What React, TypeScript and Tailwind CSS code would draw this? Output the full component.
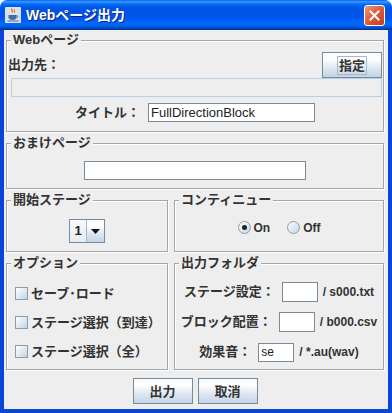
import type { ReactNode } from 'react';

const font = "font-['Liberation_Sans','Noto_Sans_CJK_JP',sans-serif]";

function Group({ title, className, children }: { title: string; className?: string; children?: ReactNode }) {
  return (
    <div className={`relative border border-[#a6a6a6] shadow-[inset_1px_1px_0_#ffffff,1px_1px_0_#ffffff] ${className ?? ''}`}>
      <span className="absolute left-[4px] -top-[9px] bg-[#eeeeee] px-[2px] text-[13px] font-bold leading-[16px] text-[#333333]">
        {title}
      </span>
      {children}
    </div>
  );
}

function Button({ label, focus, className }: { label: string; focus?: boolean; className?: string }) {
  return (
    <button
      className={`flex items-center justify-center border border-[#7a8a99] bg-[linear-gradient(to_bottom,#f7fafd,#ffffff_25%,#dfe8f2_60%,#c3d4e6)] text-[13px] font-bold text-[#333333] ${className ?? ''}`}
    >
      <span className={focus ? 'border border-[#a3b8cc] px-[1px] leading-[17px]' : 'leading-[17px]'}>{label}</span>
    </button>
  );
}

function Checkbox({ label }: { label: string }) {
  return (
    <div className="flex h-[29px] items-center gap-[3px]">
      <span className="h-[13px] w-[13px] border border-[#8a9cb0] bg-[linear-gradient(135deg,#ffffff,#dbe6f1_60%,#c2d3e5)]" />
      <span className="text-[13px] font-bold text-[#333333]">{label}</span>
    </div>
  );
}

function Radio({ label, checked }: { label: string; checked?: boolean }) {
  return (
    <div className="flex items-center gap-[3px]">
      <span className="flex h-[13px] w-[13px] items-center justify-center rounded-full border border-[#8a9cb0] bg-[linear-gradient(135deg,#ffffff,#dbe6f1_60%,#c2d3e5)]">
        {checked && <span className="h-[5px] w-[5px] rounded-full bg-[#222222]" />}
      </span>
      <span className="text-[12px] font-bold text-[#333333]">{label}</span>
    </div>
  );
}

function JavaIcon() {
  return (
    <svg width="16" height="16" viewBox="0 0 16 16">
      <rect x="0" y="0" width="16" height="16" rx="1" fill="#d9e1ee" />
      <path d="M7 1.5c-1.5 1.3 1.5 2.2 0 4" stroke="#e76f00" strokeWidth="1.2" fill="none" />
      <path d="M9.5 2.5c-1.2 1 1 1.8 -0.3 3" stroke="#e76f00" strokeWidth="1.1" fill="none" />
      <path d="M3.5 8h8v2.5c0 1.6-1.6 2.5-4 2.5s-4-0.9-4-2.5z" fill="#3f6ea8" />
      <path d="M11.5 8.6c1.6 0 1.8 1.8 0 2.2" stroke="#3f6ea8" strokeWidth="1" fill="none" />
      <path d="M2.5 14h11" stroke="#3f6ea8" strokeWidth="1" />
    </svg>
  );
}

export default function App() {
  return (
    <div className={`flex h-[413px] w-[392px] flex-col bg-white ${font}`}>
      <div className="flex h-[30px] shrink-0 items-center rounded-t-[7px] bg-[linear-gradient(to_bottom,#0058ee_0%,#3593ff_5%,#288eff_8%,#127dff_11%,#036ffc_14%,#0262ee_18%,#0057e5_24%,#0054e3_30%,#0055eb_56%,#005bf5_66%,#026afe_76%,#0062ef_86%,#0052d6_92%,#0040ab_96%,#003092_100%)] pl-[5px] pr-[7px]">
        <JavaIcon />
        <span className="ml-[5px] text-[14px] font-bold leading-none text-white [text-shadow:1px_1px_0_#0a1f6e]">
          Webページ出力
        </span>
        <span className="ml-auto flex h-[21px] w-[21px] items-center justify-center rounded-[3px] border border-white bg-[linear-gradient(135deg,#f0967a,#e0603e_45%,#c4391a)]">
          <svg width="11" height="11" viewBox="0 0 11 11">
            <path d="M1.5 1.5l8 8M9.5 1.5l-8 8" stroke="white" strokeWidth="2" strokeLinecap="square" />
          </svg>
        </span>
      </div>

      <div className="flex flex-1 flex-col border-x-4 border-b-4 border-[#0a45d8] bg-[#eeeeee] pl-[2px] pr-[4px]">
        <Group title="Webページ" className="mt-[10px] h-[92px] pl-[1px] pr-[1px] pt-[11px]">
          <div className="flex h-[26px] items-center justify-between">
            <span className="text-[13px] font-bold text-[#333333]">出力先：</span>
            <Button label="指定" focus className="h-[26px] w-[60px]" />
          </div>
          <div className="ml-[3px] h-[19px] border border-[#b8cfe5] bg-[#eeeeee]" />
          <div className="mt-[6px] flex items-center justify-center gap-[8px]">
            <span className="text-[13px] font-bold text-[#333333]">タイトル：</span>
            <div className="flex h-[19px] w-[167px] items-center border border-[#7a8a99] bg-white pl-[2px] text-[13px] text-[#222222]">
              FullDirectionBlock
            </div>
          </div>
        </Group>

        <Group title="おまけページ" className="mt-[11px] h-[46px] pt-[17px]">
          <div className="mx-auto h-[19px] w-[222px] border border-[#7a8a99] bg-white" />
        </Group>

        <div className="mt-[11px] flex gap-[6px]">
          <Group title="開始ステージ" className="h-[52px] w-[162px] pt-[18px]">
            <div className="mx-auto flex h-[24px] w-[36px] border border-[#7a8a99]">
              <span className="flex w-[17px] items-center justify-center border-r border-[#a8b8c8] bg-[linear-gradient(to_bottom,#f7fafd,#e3ebf4)] text-[13px] font-bold text-[#222222]">
                1
              </span>
              <span className="flex flex-1 items-center justify-center bg-[linear-gradient(to_bottom,#f7fafd,#ffffff_25%,#dfe8f2_60%,#c3d4e6)]">
                <svg width="9" height="5" viewBox="0 0 9 5">
                  <path d="M0 0h9L4.5 5z" fill="#111111" />
                </svg>
              </span>
            </div>
          </Group>
          <Group title="コンティニュー" className="flex h-[52px] flex-1 items-center justify-center gap-[17px] pt-[3px]">
            <Radio label="On" checked />
            <Radio label="Off" />
          </Group>
        </div>

        <div className="mt-[11px] flex gap-[6px]">
          <Group title="オプション" className="h-[107px] w-[162px] pl-[8px] pt-[15px]">
            <Checkbox label="セーブ･ロード" />
            <Checkbox label="ステージ選択（到達）" />
            <Checkbox label="ステージ選択（全）" />
          </Group>
          <Group title="出力フォルダ" className="h-[107px] flex-1 pt-[13px]">
            <div className="flex h-[30px] items-center justify-center">
              <span className="text-[13px] font-bold text-[#333333]">ステージ設定：</span>
              <span className="ml-[7px] h-[20px] w-[36px] border border-[#7a8a99] bg-white" />
              <span className="ml-[5px] text-[12px] font-bold text-[#333333]">/ s000.txt</span>
            </div>
            <div className="flex h-[30px] items-center justify-center">
              <span className="text-[13px] font-bold text-[#333333]">ブロック配置：</span>
              <span className="ml-[7px] h-[20px] w-[36px] border border-[#7a8a99] bg-white" />
              <span className="ml-[5px] text-[12px] font-bold text-[#333333]">/ b000.csv</span>
            </div>
            <div className="flex h-[30px] items-center justify-center">
              <span className="text-[13px] font-bold text-[#333333]">効果音：</span>
              <span className="ml-[7px] flex h-[19px] w-[36px] items-center border border-[#7a8a99] bg-white pl-[2px] text-[12px] text-[#222222]">
                se
              </span>
              <span className="ml-[5px] text-[12px] font-bold text-[#333333]">/ *.au(wav)</span>
            </div>
          </Group>
        </div>

        <div className="mt-[8px] flex justify-center gap-[5px]">
          <Button label="出力" className="h-[26px] w-[60px]" />
          <Button label="取消" className="h-[26px] w-[60px]" />
        </div>
      </div>
    </div>
  );
}
